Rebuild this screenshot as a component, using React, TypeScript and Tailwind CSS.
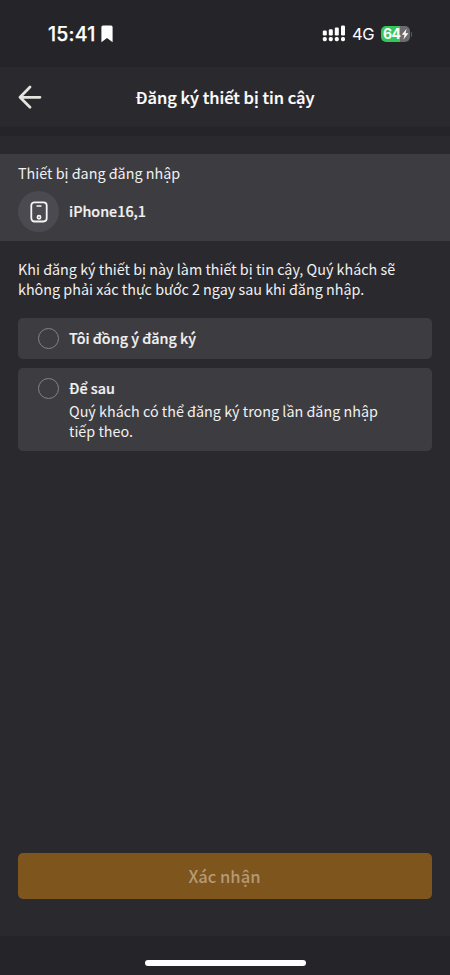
import { useState } from 'react';

const StatusBar = () => (
  <div className="flex h-[67px] items-start justify-between bg-[#252428] pt-[22px] pr-[38px] pl-12 font-['Inter','Liberation_Sans',sans-serif] text-white">
    <div className="flex h-6 items-center gap-[6px]">
      <span className="text-[19.5px] leading-6 font-medium tracking-[0.2px] [-webkit-text-stroke:0.25px]">15:41</span>
      <svg width="12" height="18" viewBox="0 0 12 18" fill="currentColor">
        <path d="M2 0.5h8a1.6 1.6 0 0 1 1.6 1.6v15.2L6 12.9 0.4 17.3V2.1A1.6 1.6 0 0 1 2 0.5z" />
      </svg>
    </div>
    <div className="flex h-6 items-center">
      {/* Dual SIM signal */}
      <svg className="mb-[1px]" width="24" height="17" viewBox="0 0 24 17" fill="currentColor">
        <rect x="0.8" y="5.5" width="4" height="5" rx="1.2" />
        <rect x="6.8" y="4.2" width="4" height="6.3" rx="1.2" />
        <rect x="12.8" y="2.6" width="4" height="7.9" rx="1.2" />
        <rect x="19" y="0.6" width="4" height="9.9" rx="1.2" />
        <rect x="0.8" y="12" width="4" height="4.2" rx="1.6" />
        <rect x="6.8" y="12" width="4" height="4.2" rx="1.6" />
        <rect x="12.8" y="12" width="4" height="4.2" rx="1.6" />
        <rect x="19" y="12" width="4" height="4.2" rx="1.6" />
      </svg>
      <span className="ml-[6px] w-[23px] text-[16.5px] leading-6 tracking-[-0.3px]">4G</span>
      <div className="ml-[6px] flex h-4 w-[29px] items-center rounded-[5px] bg-linear-to-r from-[#34c759] from-65% to-[#6b6b6e] to-65% pl-[2px]">
        <span className="text-[14px] leading-4 font-bold tracking-[-0.6px]">64</span>
        <svg className="ml-[1px]" width="8" height="12" viewBox="0 0 8 12" fill="currentColor">
          <path d="M5.6 0.8 0.8 6.8h2.8L2.4 11.4 7.4 5.2H4.5z" />
        </svg>
      </div>
      <span className="ml-[1px] h-[5px] w-[1px] rounded-r-full bg-[#59595c]" />
    </div>
  </div>
);

const Radio = ({ checked }: { checked: boolean }) => (
  <span className="flex size-[21px] shrink-0 items-center justify-center rounded-full border border-[#858487]">
    {checked && <span className="size-3 rounded-full bg-[#e09a2b]" />}
  </span>
);

const App = () => {
  const [choice, setChoice] = useState<'agree' | 'later' | null>(null);

  return (
    <div className="flex h-[975px] w-[450px] flex-col bg-[#2a292e] font-['Noto_Sans_CJK_SC','Noto_Sans',sans-serif] text-[14.35px] text-[#f1f1f1]">
      <StatusBar />

      <header className="flex h-[60px] items-center pl-[18px]">
        <button aria-label="Back">
          <svg width="24" height="24" viewBox="0 0 24 24" fill="none" stroke="#e4e4e0" strokeWidth="2.7" strokeLinecap="round" strokeLinejoin="round">
            <path d="M12 2 2 12.3l10 10M2 12.3h20" />
          </svg>
        </button>
        <h1 className="flex-1 pr-[42px] text-center text-[16.5px] leading-6 font-medium text-white [-webkit-text-stroke:0.2px]">Đăng ký thiết bị tin cậy</h1>
      </header>
      <div className="h-[9px] bg-[#252428]" />

      {/* Current device */}
      <section className="mt-[18px] h-[87px] bg-[#3d3c40] px-[18px] pt-2">
        <p className="leading-[22px]">Thiết bị đang đăng nhập</p>
        <div className="mt-[7px] flex items-center gap-[10px]">
          <span className="flex size-[41px] items-center justify-center rounded-full bg-[#4b4a50]">
            <svg width="18" height="22" viewBox="0 0 18 22" fill="none" stroke="#f6f6f6" strokeWidth="1.8" strokeLinecap="round">
              <rect x="1.3" y="1.3" width="15.4" height="19.2" rx="3.2" />
              <path d="M7 5h4" strokeWidth="1.4" />
              <circle cx="9" cy="16.2" r="1.6" strokeWidth="1.7" />
            </svg>
          </span>
          <span className="pb-[2px] font-medium [-webkit-text-stroke:0.2px]">iPhone16,1</span>
        </div>
      </section>

      <main className="px-[18px] pt-[18px]">
        <p className="leading-5">
          Khi đăng ký thiết bị này làm thiết bị tin cậy, Quý khách sẽ
          <br />
          không phải xác thực bước 2 ngay sau khi đăng nhập.
        </p>

        <button
          className="mt-[19px] flex h-[41px] w-full items-center gap-[10px] rounded-[5px] bg-[#3d3c40] pl-5 text-left"
          onClick={() => setChoice('agree')}
        >
          <Radio checked={choice === 'agree'} />
          <span className="pb-[1px] font-medium [-webkit-text-stroke:0.2px]">Tôi đồng ý đăng ký</span>
        </button>

        <button
          className="mt-[9px] flex h-[83px] w-full items-start gap-[10px] rounded-[5px] bg-[#3d3c40] pt-[10px] pl-5 text-left"
          onClick={() => setChoice('later')}
        >
          <Radio checked={choice === 'later'} />
          <span className="flex flex-col">
            <span className="leading-5 font-medium [-webkit-text-stroke:0.2px]">Để sau</span>
            <span className="mt-[3px] leading-5">
              Quý khách có thể đăng ký trong lần đăng nhập
              <br />
              tiếp theo.
            </span>
          </span>
        </button>
      </main>

      <div className="mt-auto px-[18px] pb-[37px]">
        <button className="block h-[46px] w-full rounded-[5px] bg-[#7e551c] pr-[1px] text-[16.6px] font-medium text-[#b59a77]" disabled={!choice}>
          Xác nhận
        </button>
      </div>
      <footer className="flex h-[39px] justify-center bg-[#252428] pt-6">
        <span className="h-[6px] w-[161px] rounded-full bg-white" />
      </footer>
    </div>
  );
};

export default App;
